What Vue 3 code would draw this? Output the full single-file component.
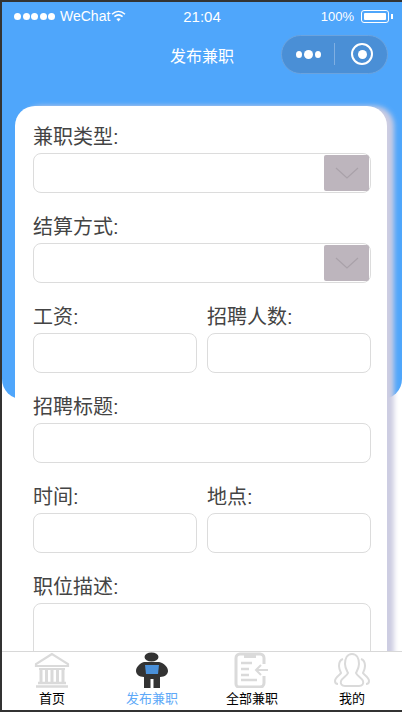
<script setup>
const rows = [
  [{ label: '兼职类型:', select: true }],
  [{ label: '结算方式:', select: true }],
  [{ label: '工资:' }, { label: '招聘人数:' }],
  [{ label: '招聘标题:' }],
  [{ label: '时间:' }, { label: '地点:' }]
]
</script>

<template>
  <div class="phone">
    <div class="blue-bg"></div>
    <div class="status">
      <div class="status-left">
        <span class="dots"><i v-for="n in 5" :key="n"></i></span>
        <span class="wechat">WeChat</span>
        <svg class="wifi" width="15" height="12" viewBox="0 0 15 12">
          <path d="M1 4.2C5 .6 10 .6 14 4.2" fill="none" stroke="#fff" stroke-width="1.5" />
          <path d="M3.4 6.6c2.6-2.2 5.6-2.2 8.2 0" fill="none" stroke="#fff" stroke-width="1.5" />
          <path d="M5.4 9c1.4-1.1 2.8-1.1 4.2 0L7.5 11.4z" fill="#fff" />
        </svg>
      </div>
      <div class="time">21:04</div>
      <div class="status-right">
        <span>100%</span>
        <span class="battery"><i></i></span>
        <span class="battery-tip"></span>
      </div>
    </div>
    <div class="nav">
      <div class="nav-title">发布兼职</div>
      <div class="capsule">
        <div class="cap-dots"><i></i><i class="big"></i><i></i></div>
        <div class="cap-line"></div>
        <div class="cap-target"><i></i></div>
      </div>
    </div>

    <div class="content">
      <div class="card">
        <div v-for="(row, i) in rows" :key="i" class="row">
          <div v-for="field in row" :key="field.label" class="field">
            <div class="label">{{ field.label }}</div>
            <div class="input">
              <div v-if="field.select" class="arrow">
                <svg width="26" height="14" viewBox="0 0 26 14">
                  <path d="M2 2l11 10L24 2" fill="none" stroke="#a9a1a9" stroke-width="1.2" />
                </svg>
              </div>
            </div>
          </div>
        </div>
        <div class="row">
          <div class="field">
            <div class="label">职位描述:</div>
            <div class="input textarea"></div>
          </div>
        </div>
      </div>
    </div>

    <div class="tabbar">
      <div class="tab">
        <svg width="36" height="36" viewBox="0 0 36 36">
          <path d="M18 2L2 12v2h32v-2z" fill="none" stroke="#dadada" stroke-width="2.2" />
          <path d="M5 17h26" stroke="#dadada" stroke-width="2" />
          <path d="M7 18v12M12.500 18v12M18 18v12M23.500 18v12M29 18v12" stroke="#dadada" stroke-width="3" />
          <path d="M4 31h28M2 34.500h32" stroke="#dadada" stroke-width="2.4" />
        </svg>
        <span>首页</span>
      </div>
      <div class="tab active">
        <svg width="36" height="36" viewBox="0 0 36 36">
          <ellipse cx="17.500" cy="5" rx="7" ry="4.500" fill="#333" />
          <path d="M10 10h15c5 1 9 5 9 9 0 3-3 6-8 6v11h-6.500V27h-3v9H10V25c-5 0-8-3-8-6 0-4 4-8 8-9z" fill="#333" />
          <path d="M11 13h14l-1 9H12z" fill="#4a90d9" />
        </svg>
        <span>发布兼职</span>
      </div>
      <div class="tab">
        <svg width="36" height="36" viewBox="0 0 36 36">
          <path d="M30 12V6a4 4 0 0 0-4-4H6a4 4 0 0 0-4 4v26a3 3 0 0 0 3 3h21a4 4 0 0 0 4-4v-7" fill="none" stroke="#dadada" stroke-width="3" />
          <path d="M10 1h12v5H10z" fill="#dadada" />
          <path d="M7 11h11M7 17h8M7 23h8M7 28h16" stroke="#dadada" stroke-width="2.6" />
          <path d="M34 18H23M27 13l-5 5 5 5" fill="none" stroke="#dadada" stroke-width="2" />
        </svg>
        <span>全部兼职</span>
      </div>
      <div class="tab">
        <svg width="36" height="36" viewBox="0 0 36 36">
          <path d="M18 2c5 0 7 5 7 10 0 4-2 7-3 9 1 3 6 5 7 8 1 3-1 5-4 5H11c-3 0-5-2-4-5 1-3 6-5 7-8-1-2-3-5-3-9 0-5 2-10 7-10z" fill="none" stroke="#dadada" stroke-width="2" />
          <path d="M9 7c-3 1-4 4-4 7 0 3 1 5 2 7-1 2-6 4-6 8 0 2 1 3 3 3M27 7c3 1 4 4 4 7 0 3-1 5-2 7 1 2 6 4 6 8 0 2-1 3-3 3" fill="none" stroke="#dadada" stroke-width="2" />
        </svg>
        <span>我的</span>
      </div>
    </div>
  </div>
</template>

<style>
html, body {
  margin: 0;
  padding: 0;
}
</style>

<style scoped>
.phone {
  position: relative;
  box-sizing: border-box;
  width: 402px;
  height: 712px;
  border-top: 2px solid #333;
  border-bottom: 2px solid #333;
  border-left: 2px solid #333;
  background: #fff;
  display: flex;
  flex-direction: column;
  overflow: hidden;
  font-family: "Liberation Sans", "Noto Sans CJK SC", sans-serif;
  color: #333;
}
.blue-bg {
  position: absolute;
  left: 0;
  right: 0;
  top: 0;
  height: 397px;
  background: #4fa6fb;
  border-radius: 0 0 20px 20px;
}
.status {
  position: relative;
  height: 28px;
  display: flex;
  align-items: center;
  color: #fff;
  font-size: 14px;
  flex-shrink: 0;
}
.status-left {
  width: 160px;
  padding-left: 12px;
  box-sizing: border-box;
  display: flex;
  align-items: center;
}
.dots {
  display: flex;
  gap: 1.5px;
  margin-right: 5px;
}
.dots i {
  width: 7px;
  height: 7px;
  border-radius: 50%;
  background: #fff;
}
.wifi {
  margin-left: 1px;
}
.time {
  width: 60px;
  text-align: center;
  font-size: 15px;
  margin-left: 10px;
}
.status-right {
  margin-left: auto;
  display: flex;
  align-items: center;
  font-size: 13px;
  padding-right: 9px;
}
.status-right span:first-child {
  margin-right: 7px;
}
.battery {
  box-sizing: border-box;
  width: 28px;
  height: 13px;
  border: 1px solid #fff;
  border-radius: 3px;
  padding: 2px;
  display: flex;
}
.battery i {
  flex: 1;
  background: #fff;
  border-radius: 1px;
}
.battery-tip {
  width: 2px;
  height: 5px;
  margin-left: 2px;
  background: #fff;
}
.nav {
  position: relative;
  height: 50px;
  flex-shrink: 0;
  display: flex;
  align-items: center;
  justify-content: flex-end;
  padding-right: 14px;
}
.nav-title {
  position: absolute;
  left: 0;
  right: 0;
  text-align: center;
  color: #fff;
  font-size: 16px;
  padding-bottom: 1px;
}
.capsule {
  box-sizing: border-box;
  width: 107px;
  height: 39px;
  border-radius: 20px;
  background: #4a8fd6;
  border: 1px solid #6ba3de;
  display: flex;
  align-items: center;
  margin-bottom: 2px;
}
.cap-dots {
  width: 52px;
  display: flex;
  justify-content: center;
  align-items: center;
  gap: 2px;
}
.cap-dots i {
  width: 6px;
  height: 7px;
  border-radius: 50%;
  background: #fff;
}
.cap-dots i.big {
  width: 9px;
  height: 9px;
}
.cap-line {
  width: 1px;
  height: 22px;
  background: #7fafe2;
}
.cap-target {
  box-sizing: border-box;
  width: 22px;
  height: 22px;
  margin-left: 16px;
  border: 2px solid #fff;
  border-radius: 50%;
  display: flex;
  align-items: center;
  justify-content: center;
}
.cap-target i {
  width: 9px;
  height: 9px;
  border-radius: 50%;
  background: #fff;
}
.content {
  position: relative;
  flex: 1;
  overflow: hidden;
  padding: 26px 15px 0 13px;
}
.card {
  width: 372px;
  box-sizing: border-box;
  background: #fff;
  border-radius: 20px;
  box-shadow: 7px 0 5px #cdcde2;
  padding: 17px 16px 20px 18px;
}
.row {
  display: flex;
  gap: 10px;
  margin-bottom: 20px;
}
.field {
  flex: 1;
  min-width: 0;
}
.label {
  height: 30px;
  line-height: 28px;
  font-size: 20px;
  color: #444;
}
.input {
  box-sizing: border-box;
  height: 40px;
  border: 1px solid #dcdcdc;
  border-radius: 8px;
  background: #fff;
  display: flex;
  justify-content: flex-end;
  align-items: center;
  padding-right: 1px;
}
.textarea {
  height: 120px;
}
.arrow {
  width: 45px;
  height: 36px;
  background: #bdb5bd;
  border-radius: 2px;
  display: flex;
  align-items: center;
  justify-content: center;
}
.tabbar {
  position: relative;
  flex-shrink: 0;
  box-sizing: border-box;
  height: 59px;
  border-top: 1px solid #d8d8d8;
  background: #fff;
  display: flex;
}
.tab {
  flex: 1;
  display: flex;
  flex-direction: column;
  align-items: center;
  font-size: 13px;
  color: #000;
}
.tab svg {
  flex-shrink: 0;
}
.tab span {
  line-height: 18px;
  margin-top: 2px;
}
.tab.active {
  color: #5ea9f8;
}
</style>
